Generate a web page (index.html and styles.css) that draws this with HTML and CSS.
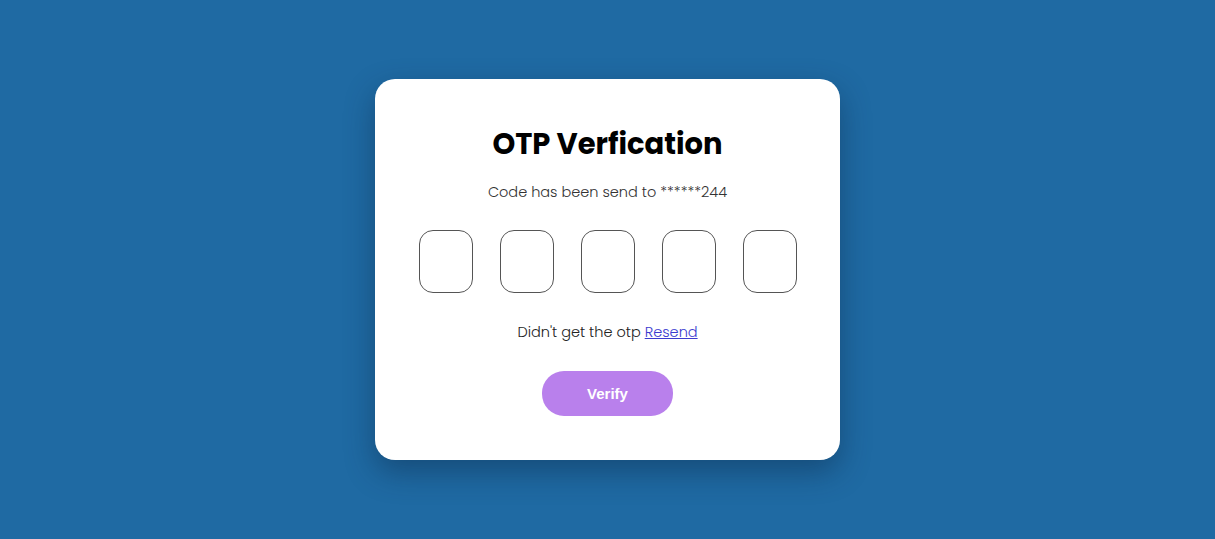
FILE: index.html
```html
<!DOCTYPE html>
<html lang="en">
<head>
<meta charset="utf-8">
<title>OTP Verification</title>
<link rel="stylesheet" href="styles.css">
</head>
<body>
<main class="page">
  <section class="card">
    <h1 class="title">OTP Verfication</h1>
    <p class="subtitle">Code has been send to ******244</p>
    <div class="otp-row">
      <input class="otp-box" type="text" maxlength="1">
      <input class="otp-box" type="text" maxlength="1">
      <input class="otp-box" type="text" maxlength="1">
      <input class="otp-box" type="text" maxlength="1">
      <input class="otp-box" type="text" maxlength="1">
    </div>
    <p class="resend-line">Didn't get the otp <a class="resend-link" href="#">Resend</a></p>
    <button class="verify-btn" type="button">Verify</button>
  </section>
</main>
</body>
</html>
```

FILE: styles.css
```css
* { box-sizing: border-box; }
html, body { margin: 0; padding: 0; }
body {
  background: #1f6aa3;
  font-family: "Poppins", "Inter", "DejaVu Sans", sans-serif;
}
.page {
  height: 539px;
  display: flex;
  align-items: center;
  justify-content: center;
}
.card {
  width: 465px;
  height: 381px;
  background: #ffffff;
  border-radius: 20px;
  box-shadow: 0 12px 30px rgba(10, 40, 70, 0.45);
  display: flex;
  flex-direction: column;
  align-items: center;
  padding-top: 46px;
}
.title {
  margin: 0;
  font-size: 29px;
  font-weight: 700;
  color: #000;
  line-height: 38px;
}
.subtitle {
  margin: 18px 0 0;
  font-size: 14.5px;
  font-weight: 300;
  color: #333;
  line-height: 22px;
}
.otp-row {
  margin-top: 27px;
  display: flex;
  gap: 27px;
}
.otp-box {
  width: 54px;
  height: 63px;
  border: 1px solid #555;
  border-radius: 14px;
  background: #fff;
  outline: none;
  padding: 0;
  text-align: center;
  font-size: 22px;
}
.resend-line {
  margin: 28px 0 0;
  font-size: 14.5px;
  font-weight: 300;
  color: #222;
  line-height: 22px;
}
.resend-link {
  color: #3b3bcf;
  text-decoration: underline;
}
.verify-btn {
  margin-top: 28px;
  width: 131px;
  height: 45px;
  border: none;
  border-radius: 22px;
  background: #b980ec;
  color: #fff;
  font-family: "Liberation Sans", Arial, sans-serif;
  font-size: 15px;
  font-weight: 700;
  cursor: pointer;
}
```
